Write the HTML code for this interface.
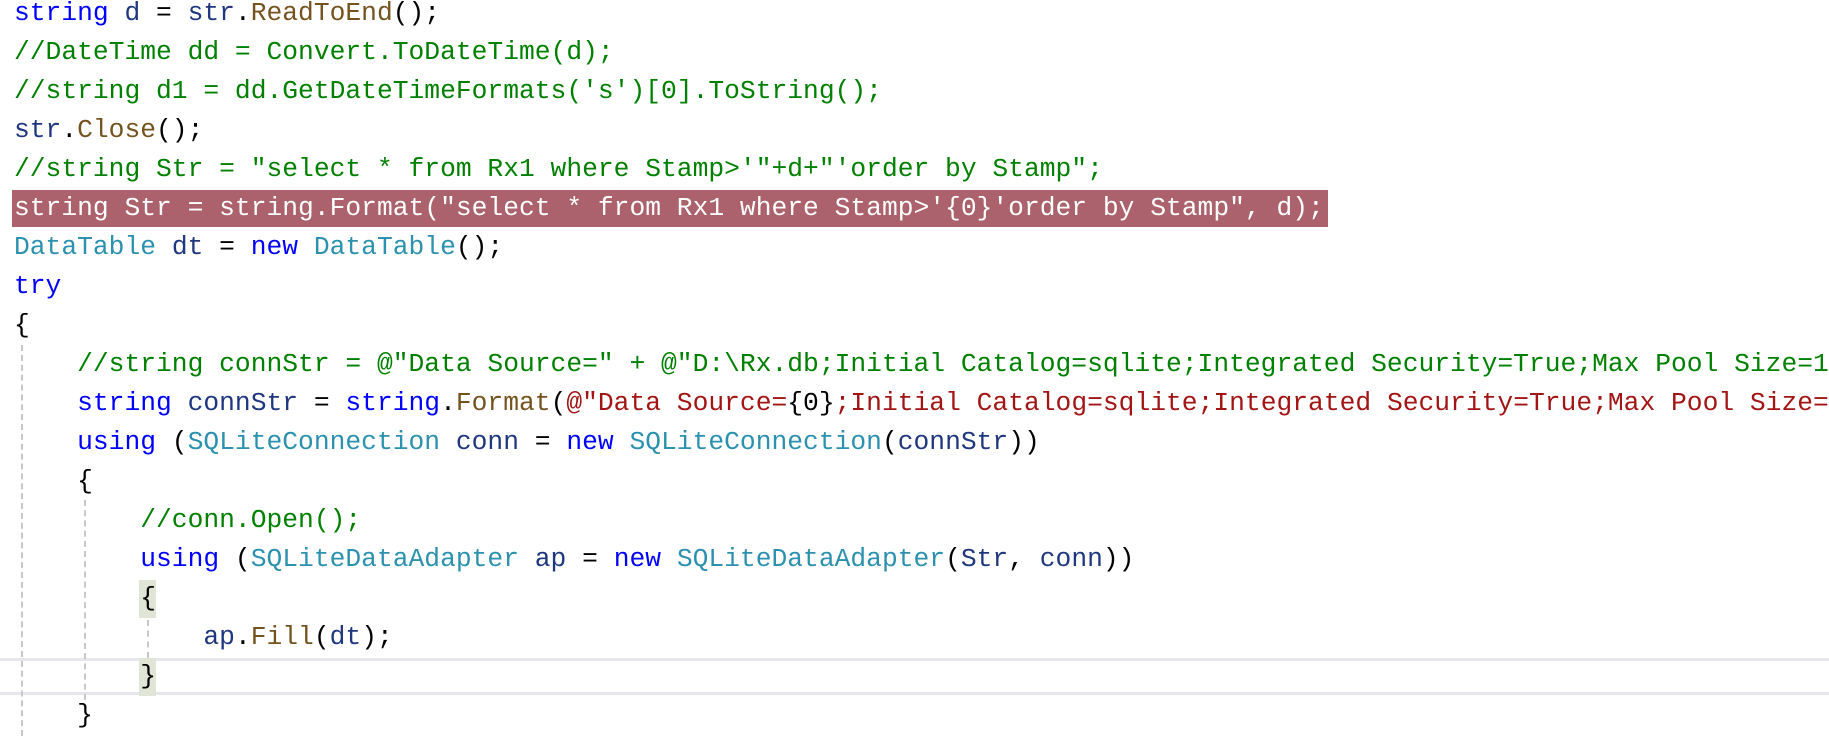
<!DOCTYPE html>
<html><head><meta charset="utf-8"><style>
html,body{margin:0;padding:0;width:1829px;height:736px;overflow:hidden;background:#fff}
.r{position:absolute;left:14px;height:39px;line-height:39px;white-space:pre;font-family:"Liberation Mono","Noto Sans CJK SC",monospace;font-size:26.3px;color:#000}
.k{color:#0000ff}.t{color:#2b91af}.m{color:#74531f}.v{color:#1f377f}.c{color:#008000}.s{color:#a31515}
.hl{position:absolute;left:12px;top:190px;width:1316px;height:37px;background:#ab626c}
.g{position:absolute;width:0;border-left:2px dashed #c8c8c8}
.cl{position:absolute;left:0;width:1829px;height:3px;background:#e6e6ee}
.bb{position:absolute;left:139px;width:17px;height:38px;background:#e1e5d6}
</style></head><body>
<div class="cl" style="top:658px"></div>
<div class="cl" style="top:692px"></div>
<div class="hl"></div>
<div class="bb" style="top:580px"></div>
<div class="bb" style="top:658px"></div>
<div class="g" style="left:21px;top:345px;height:391px"></div>
<div class="g" style="left:84px;top:500px;height:200px"></div>
<div class="g" style="left:147px;top:620px;height:38px"></div>
<div class="r" style="top:-6px"><span class="k">string</span> <span class="v">d</span> = <span class="v">str</span>.<span class="m">ReadToEnd</span>();</div>
<div class="r c" style="top:33px">//DateTime dd = Convert.ToDateTime(d);</div>
<div class="r c" style="top:72px">//string d1 = dd.GetDateTimeFormats('s')[0].ToString();</div>
<div class="r" style="top:111px"><span class="v">str</span>.<span class="m">Close</span>();</div>
<div class="r c" style="top:150px">//string Str = "select * from Rx1 where Stamp&gt;'"+d+"'order by Stamp";</div>
<div class="r" style="top:189px;color:#fff">string Str = string.Format("select * from Rx1 where Stamp&gt;'{0}'order by Stamp", d);</div>
<div class="r" style="top:228px"><span class="t">DataTable</span> <span class="v">dt</span> = <span class="k">new</span> <span class="t">DataTable</span>();</div>
<div class="r k" style="top:267px">try</div>
<div class="r" style="top:306px">{</div>
<div class="r c" style="top:345px">    //string connStr = @"Data Source=" + @"D:\Rx.db;Initial Catalog=sqlite;Integrated Security=True;Max Pool Size=1</div>
<div class="r" style="top:384px">    <span class="k">string</span> <span class="v">connStr</span> = <span class="k">string</span>.<span class="m">Format</span>(<span class="s">@"Data Source=</span>{0}<span class="s">;Initial Catalog=sqlite;Integrated Security=True;Max Pool Size=1</span></div>
<div class="r" style="top:423px">    <span class="k">using</span> (<span class="t">SQLiteConnection</span> <span class="v">conn</span> = <span class="k">new</span> <span class="t">SQLiteConnection</span>(<span class="v">connStr</span>))</div>
<div class="r" style="top:462px">    {</div>
<div class="r c" style="top:501px">        //conn.Open();</div>
<div class="r" style="top:540px">        <span class="k">using</span> (<span class="t">SQLiteDataAdapter</span> <span class="v">ap</span> = <span class="k">new</span> <span class="t">SQLiteDataAdapter</span>(<span class="v">Str</span>, <span class="v">conn</span>))</div>
<div class="r" style="top:579px">        {</div>
<div class="r" style="top:618px">            <span class="v">ap</span>.<span class="m">Fill</span>(<span class="v">dt</span>);</div>
<div class="r" style="top:657px">        }</div>
<div class="r" style="top:696px">    }</div>
</body></html>
